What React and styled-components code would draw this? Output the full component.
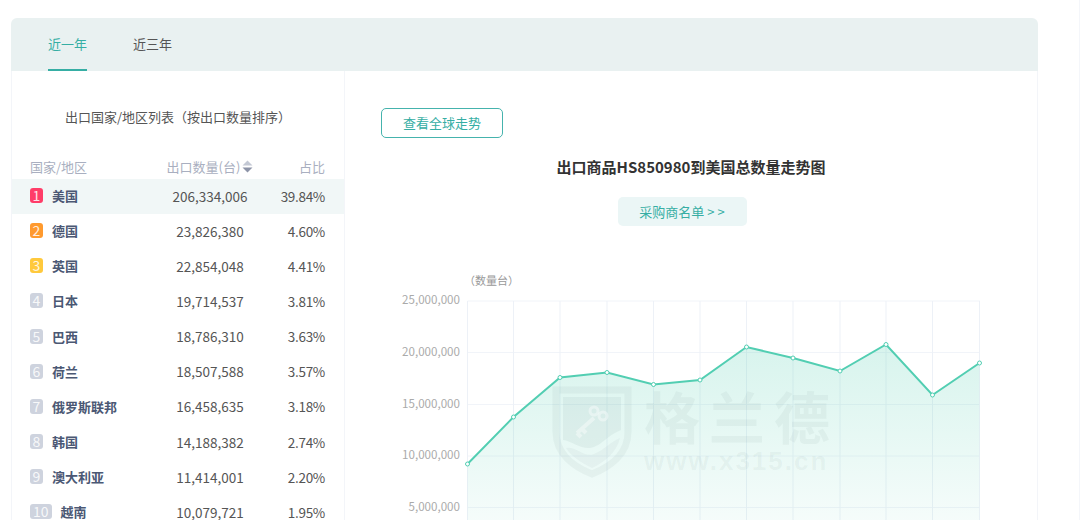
import styled, { createGlobalStyle } from 'styled-components';

const GlobalStyle = createGlobalStyle`
  html, body {
    margin: 0;
    height: 520px;
    overflow: hidden;
    background: #fff;
  }
  body {
    font-family: "Noto Sans CJK SC", "Noto Sans", sans-serif;
    font-size: 13px;
  }
`;

const Page = styled.div`
  width: 1080px;
  height: 520px;
  padding: 18px 0 0 11px;
  box-sizing: border-box;
  border-right: 1px solid #f4f6fa;
  overflow: hidden;
`;

const Card = styled.div`
  width: 1027px;
`;

const TabBar = styled.div`
  height: 53px;
  display: flex;
  gap: 46px;
  padding-left: 37px;
  background: #e9f1f1;
  border-radius: 6px 6px 0 0;
`;

const Tab = styled.div`
  height: 53px;
  line-height: 52px;
  box-sizing: border-box;
  font-size: 13px;
  color: ${(p) => (p.$active ? '#36aea4' : '#555')};
  border-bottom: 2px solid ${(p) => (p.$active ? '#36aea4' : 'transparent')};
`;

const Body = styled.div`
  display: grid;
  grid-template-columns: 333px 1fr;
  border: 1px solid #f3f5f9;
  border-top: 0;
  box-sizing: border-box;
  height: 600px;
`;

const ListPanel = styled.div`
  border-right: 1px solid #f3f5f9;
  padding-top: 36px;
`;

const ListTitle = styled.div`
  line-height: 20px;
  text-align: center;
  color: #555;
  margin-bottom: 29px;
`;

const Columns = styled.div`
  display: grid;
  grid-template-columns: 130px 100px 65px;
  padding-left: 18px;
  align-items: center;
`;

const HeadRow = styled(Columns)`
  height: 20px;
  margin-bottom: 3px;
  color: #a9afc0;
`;

const SortHead = styled.div`
  display: flex;
  align-items: center;
  justify-content: center;
  gap: 2px;
  white-space: nowrap;
`;

const HeadShare = styled.div`
  text-align: right;
`;

const Row = styled(Columns)`
  height: 35.15px;
  box-sizing: border-box;
  padding-bottom: 2px;
  background: ${(p) => (p.$active ? '#f1f7f7' : 'transparent')};
`;

const Name = styled.div`
  display: flex;
  align-items: center;
  gap: 9px;
  font-weight: 700;
  color: #4b5874;
  white-space: nowrap;
`;

const Rank = styled.span`
  min-width: 13px;
  height: 15px;
  padding: 0 ${(p) => (p.$wide ? '3px' : '0')};
  border-radius: 3px;
  background: ${(p) => p.$color};
  color: rgba(255, 255, 255, 0.85);
  font-size: 14px;
  font-weight: 400;
  line-height: 15px;
  text-align: center;
`;

const Qty = styled.div`
  text-align: center;
  font-size: 13.5px;
  color: #555;
`;

const Share = styled.div`
  text-align: right;
  font-size: 13.5px;
  letter-spacing: -0.3px;
  color: #555;
`;

const TrendPanel = styled.div`
  padding-top: 37px;
  display: flex;
  flex-direction: column;
  align-items: center;
`;

const GlobalButton = styled.div`
  align-self: flex-start;
  margin-left: 36px;
  width: 122px;
  height: 30px;
  box-sizing: border-box;
  border: 1px solid #45b3ad;
  border-radius: 5px;
  color: #36aea4;
  line-height: 28px;
  text-align: center;
`;

const TrendTitle = styled.div`
  margin-top: 19px;
  line-height: 20px;
  font-size: 15px;
  font-weight: 700;
  color: #333;
`;

const BuyerButton = styled.div`
  margin: 20px 18px 0 0;
  width: 129px;
  height: 29px;
  border-radius: 5px;
  background: #ebf6f6;
  color: #36aea4;
  line-height: 29px;
  text-align: center;
`;

const ChartWrap = styled.div`
  position: relative;
  align-self: stretch;
  margin-top: 44px;
`;

const ChartSvg = styled.svg`
  display: block;
  width: 692px;
  height: 290px;
`;

const Watermark = styled.div`
  position: absolute;
  left: 207px;
  top: 116px;
  display: flex;
  gap: 12px;
  color: rgba(95, 125, 130, 0.07);
  pointer-events: none;
`;

const WatermarkText = styled.div`
  display: flex;
  flex-direction: column;
`;

const WatermarkName = styled.div`
  font-size: 56px;
  line-height: 58px;
  font-weight: 700;
  letter-spacing: 9px;
  white-space: nowrap;
`;

const WatermarkUrl = styled.div`
  font-family: "Liberation Sans", sans-serif;
  font-size: 26px;
  line-height: 30px;
  font-weight: 700;
  letter-spacing: 2px;
  margin-top: 2px;
`;

const rankColors = ['#ff3d68', '#ff9a2e', '#ffc93c'];

const countries = [
  ['美国', '206,334,006', '39.84%'],
  ['德国', '23,826,380', '4.60%'],
  ['英国', '22,854,048', '4.41%'],
  ['日本', '19,714,537', '3.81%'],
  ['巴西', '18,786,310', '3.63%'],
  ['荷兰', '18,507,588', '3.57%'],
  ['俄罗斯联邦', '16,458,635', '3.18%'],
  ['韩国', '14,188,382', '2.74%'],
  ['澳大利亚', '11,414,001', '2.20%'],
  ['越南', '10,079,721', '1.95%'],
];

const points = [
  [467.5, 464], [513.5, 417], [560, 377.5], [607, 372.5], [653.5, 384.5], [700, 380],
  [746.5, 347], [793, 358], [840, 371], [886, 344.5], [932.5, 395], [979.5, 363],
];

const yTicks = [
  ['25,000,000', 301],
  ['20,000,000', 352.5],
  ['15,000,000', 404.5],
  ['10,000,000', 456],
  ['5,000,000', 507.5],
];

const line = points.map((p) => p.join(',')).join(' ');

const SortIcon = () => (
  <svg width="11" height="13" viewBox="0 0 11 13">
    <path d="M5.5 0.5 L10.5 5.5 H0.5 Z" fill="#c3c8d4" />
    <path d="M5.5 12.5 L10.5 7.5 H0.5 Z" fill="#8d94a8" />
  </svg>
);

const Chart = () => (
  <ChartSvg viewBox="345 270 692 290">
    <defs>
      <linearGradient id="area" gradientUnits="userSpaceOnUse" x1="0" y1="344" x2="0" y2="560">
        <stop offset="0" stopColor="#5ad0b4" stopOpacity="0.24" />
        <stop offset="1" stopColor="#5ad0b4" stopOpacity="0.02" />
      </linearGradient>
    </defs>
    <text x="464" y="285" fontSize="11" fill="#999">（数量台）</text>
    {yTicks.map(([label, y]) => (
      <g key={label}>
        <text x="460" y={y + 3} fontSize="11.6" fill="#aaa" textAnchor="end">{label}</text>
        <line x1="467.5" x2="980" y1={y} y2={y} stroke="#f1f4f9" />
      </g>
    ))}
    {points.map(([x]) => (
      <line key={x} x1={x} x2={x} y1="301" y2="560" stroke="#edf1f7" />
    ))}
    <polygon points={`467.5,560 ${line} 979.5,560`} fill="url(#area)" />
    <polyline points={line} fill="none" stroke="#52ceb2" strokeWidth="2" />
    {points.map(([x, y]) => (
      <circle key={x} cx={x} cy={y} r="2" fill="#fff" stroke="#52ceb2" />
    ))}
  </ChartSvg>
);

const Shield = () => (
  <svg width="80" height="92" viewBox="0 0 80 92" fill="none">
    <path
      d="M4 4 H76 V46 C76 68 58 81 40 88 C22 81 4 68 4 46 Z"
      stroke="rgba(95,125,130,0.07)"
      strokeWidth="7"
    />
    <path
      d="M11 11 H69 V44 C54 50 50 60 38 62 C28 63 20 55 11 54 Z"
      fill="rgba(95,125,130,0.08)"
    />
    <path
      d="M14 62 C24 60 32 72 42 68 C52 64 58 56 68 52 C64 68 52 76 40 82 C28 76 19 70 14 62 Z"
      fill="rgba(95,125,130,0.06)"
    />
    <g stroke="rgba(255,255,255,0.4)">
      <circle cx="42" cy="25" r="4" strokeWidth="3" />
      <circle cx="51" cy="30" r="4" strokeWidth="3" />
      <path d="M42 32 L25 47 M30 43 L34 47 M25 47 L29 51" strokeWidth="4" />
    </g>
  </svg>
);

const App = () => (
  <Page>
    <GlobalStyle />
    <Card>
      <TabBar>
        <Tab $active>近一年</Tab>
        <Tab>近三年</Tab>
      </TabBar>
      <Body>
        <ListPanel>
          <ListTitle>出口国家/地区列表（按出口数量排序）</ListTitle>
          <HeadRow>
            <div>国家/地区</div>
            <SortHead>出口数量(台)<SortIcon /></SortHead>
            <HeadShare>占比</HeadShare>
          </HeadRow>
          {countries.map(([name, qty, share], i) => (
            <Row key={name} $active={i === 0}>
              <Name>
                <Rank $color={rankColors[i] || '#ced3de'} $wide={i === 9}>{i + 1}</Rank>
                {name}
              </Name>
              <Qty>{qty}</Qty>
              <Share>{share}</Share>
            </Row>
          ))}
        </ListPanel>
        <TrendPanel>
          <GlobalButton>查看全球走势</GlobalButton>
          <TrendTitle>出口商品HS850980到美国总数量走势图</TrendTitle>
          <BuyerButton>采购商名单 &gt; &gt;</BuyerButton>
          <ChartWrap>
            <Chart />
            <Watermark>
              <Shield />
              <WatermarkText>
                <WatermarkName>格兰德</WatermarkName>
                <WatermarkUrl>www.x315.cn</WatermarkUrl>
              </WatermarkText>
            </Watermark>
          </ChartWrap>
        </TrendPanel>
      </Body>
    </Card>
  </Page>
);

export default App;
